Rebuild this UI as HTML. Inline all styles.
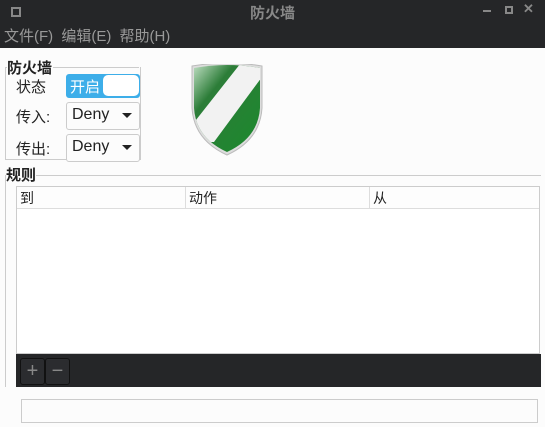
<html><head><style>
body{margin:0;width:545px;height:427px;background:#fcfcfc;font-family:"Liberation Sans","Noto Sans CJK SC",sans-serif;position:relative;overflow:hidden;font-size:14px;color:#222}
.a{position:absolute}
</style></head><body>
<div class="a" style="left:0;top:0;width:545px;height:48px;background:#252628"></div>
<div class="a" style="left:11px;top:7px;width:6px;height:6px;border:2px solid #888"></div>
<div class="a" style="left:0;top:2px;width:545px;text-align:center;color:#888;font-weight:bold;font-size:15px">防火墙</div>
<div class="a" style="left:483px;top:10px;width:8px;height:2px;background:#888"></div>
<div class="a" style="left:505px;top:6px;width:4px;height:4px;border:2px solid #888"></div>
<div class="a" style="left:523px;top:1px;color:#888;font-size:13px;font-weight:bold">✕</div>
<div class="a" style="left:4px;top:25px;color:#999;font-size:15px;word-spacing:4px">文件(F) 编辑(E) 帮助(H)</div>

<div class="a" style="left:5px;top:67px;width:134px;height:92px;border:1px solid #ccc;border-top:none"></div>
<div class="a" style="left:5px;top:67px;width:134px;border-top:1px solid #ccc"></div>
<div class="a" style="left:7px;top:57px;font-weight:bold;font-size:15px;background:#fcfcfc;padding-right:1px">防火墙</div>
<div class="a" style="left:16px;top:76px;font-size:15px">状态</div>
<div class="a" style="left:66px;top:74px;width:72px;height:22px;border:1px solid #3daee9;border-radius:3px;background:#3daee9"></div>
<div class="a" style="left:70px;top:76px;color:#fff;font-size:15px">开启</div>
<div class="a" style="left:103px;top:75px;width:36px;height:21px;background:#fff;border-radius:5px"></div>
<div class="a" style="left:16px;top:106px;font-size:15px">传入:</div>
<div class="a" style="left:66px;top:102px;width:72px;height:26px;border:1px solid #ccc;border-radius:3px;background:#fcfcfc"></div>
<div class="a" style="left:72px;top:106px;font-size:16px">Deny</div>
<div class="a" style="left:122px;top:113px;border-left:5px solid transparent;border-right:5px solid transparent;border-top:5px solid #222"></div>
<div class="a" style="left:16px;top:138px;font-size:15px">传出:</div>
<div class="a" style="left:66px;top:134px;width:72px;height:26px;border:1px solid #ccc;border-radius:3px;background:#fcfcfc"></div>
<div class="a" style="left:72px;top:138px;font-size:16px">Deny</div>
<div class="a" style="left:122px;top:145px;border-left:5px solid transparent;border-right:5px solid transparent;border-top:5px solid #222"></div>

<svg class="a" style="left:190px;top:64px" width="74" height="92" viewBox="0 0 74 92">
<defs><linearGradient id="g" x1="0" y1="0" x2="1" y2="1"><stop offset="0" stop-color="#cde8d0"/><stop offset=".3" stop-color="#2c7d38"/><stop offset="1" stop-color="#1a8a2c"/></linearGradient>
<clipPath id="c"><path d="M4 4 Q37 -2 70 4 L70 44 Q68 74 37 88 Q6 74 4 44Z"/></clipPath></defs>
<path d="M2 2 Q37 -4 72 2 L72 44 Q70 76 37 91 Q4 76 2 44Z" fill="#ddd" stroke="#bbb"/>
<g clip-path="url(#c)"><rect width="74" height="92" fill="url(#g)"/><path d="M54 -5 L80 -5 L80 2 L24 78 L-5 78 L-5 70Z" fill="#f2f2f2"/></g>
</svg>

<div class="a" style="left:5px;top:175px;width:535px;height:211px;border-left:1px solid #ccc;border-top:1px solid #ccc"></div>
<div class="a" style="left:6px;top:164px;font-weight:bold;font-size:15px;background:#fcfcfc">规则</div>
<div class="a" style="left:16px;top:186px;width:524px;height:168px;border:1px solid #ccc;background:#fff;box-sizing:border-box"></div>
<div class="a" style="left:17px;top:187px;width:522px;height:21px;border-bottom:1px solid #ddd;background:#fdfdfd"></div>
<div class="a" style="left:185px;top:187px;width:1px;height:21px;background:#ddd"></div>
<div class="a" style="left:369px;top:187px;width:1px;height:21px;background:#ddd"></div>
<div class="a" style="left:20px;top:188px">到</div>
<div class="a" style="left:189px;top:188px">动作</div>
<div class="a" style="left:373px;top:188px">从</div>
<div class="a" style="left:16px;top:354px;width:525px;height:33px;background:#252628"></div>
<div class="a" style="left:20px;top:358px;width:23px;height:25px;border:1px solid #111;border-radius:3px;background:#2b2c2f;color:#888;text-align:center;line-height:25px;font-size:20px">+</div>
<div class="a" style="left:45px;top:358px;width:23px;height:25px;border:1px solid #111;border-radius:3px;background:#2b2c2f;color:#888;text-align:center;line-height:25px;font-size:20px">−</div>
<div class="a" style="left:21px;top:399px;width:515px;height:22px;border:1px solid #ccc;background:#fcfcfc"></div>
</body></html>
